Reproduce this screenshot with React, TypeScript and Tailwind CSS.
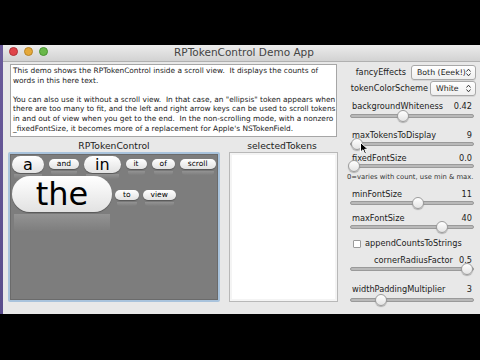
import React from "react"

const sans = "font-['DejaVu_Sans','Liberation_Sans',sans-serif]"

function Knob({ pct }: { pct: number }) {
  return (
    <div className="relative h-[12px] mx-[2px]">
      <div className="absolute left-0 right-0 top-[4px] h-[4px] rounded-full bg-[#b9b9b9] border border-[#9a9a9a]" />
      <div
        className="absolute top-0 w-[12px] h-[12px] -ml-[6px] rounded-full bg-gradient-to-b from-white to-[#e4e4e4] border border-[#9c9c9c] shadow-[0_1px_1px_rgba(0,0,0,0.25)]"
        style={{ left: `${pct}%` }}
      />
    </div>
  )
}

function Slider({
  label,
  value,
  pct,
  mt,
  gap,
  indent,
}: {
  label: string
  value: string
  pct: number
  mt: string
  gap: string
  indent?: string
}) {
  return (
    <div className={mt}>
      <div className={`flex justify-between items-center h-[10px] pr-[4px] text-[8.2px] leading-[10px] text-[#222] whitespace-nowrap ${indent ?? "pl-[4px]"}`}>
        <span>{label}</span>
        <span>{value}</span>
      </div>
      <div className={gap}>
        <Knob pct={pct} />
      </div>
    </div>
  )
}

function Popup({ text, w }: { text: string; w: string }) {
  return (
    <div className={`${w} shrink-0 h-[15px] flex items-center justify-between pl-[5px] pr-[4px] rounded-[3px] bg-gradient-to-b from-white to-[#efefef] border border-[#a8a8a8] shadow-[0_1px_0_rgba(0,0,0,0.08)] text-[7.8px] text-[#222] whitespace-nowrap`}>
      <span>{text}</span>
      <svg width="5" height="9" viewBox="0 0 5 9">
        <path d="M0.5 3.5 L2.5 1.2 L4.5 3.5 M0.5 5.5 L2.5 7.8 L4.5 5.5" fill="none" stroke="#333" strokeWidth="1" />
      </svg>
    </div>
  )
}

function Token({ word, size }: { word: string; size: "s" | "m" | "l" }) {
  const pill =
    size === "l"
      ? "h-[36px] w-[100px] text-[32px] rounded-[18px]"
      : size === "m"
      ? "h-[17px] px-[11px] text-[16px] rounded-[9px]"
      : "h-[10px] px-[8px] text-[7.5px] rounded-[5px]"
  const refl = size === "l" ? "h-[17px] mt-[2px]" : size === "m" ? "h-[5px] mt-[1px]" : "h-[4px] mt-[2px]"
  return (
    <div className="flex flex-col items-stretch">
      <div className={`${pill} flex items-center justify-center bg-gradient-to-b from-white to-[#e2e2e2] text-black leading-none shadow-[0_1px_1px_rgba(0,0,0,0.3)]`}>
        {word}
      </div>
      <div className={`${refl} mx-[2px] rounded-b-[3px] bg-gradient-to-b from-[#939393] to-[#7e7e7e]`} />
    </div>
  )
}

export default function App() {
  const lines1 = [
    "This demo shows the RPTokenControl inside a scroll view.  It displays the counts of",
    "words in this here text.",
  ]
  const lines2 = [
    "You can also use it without a scroll view.  In that case, an \"ellipsis\" token appears when",
    "there are too many to fit, and the left and right arrow keys can be used to scroll tokens",
    "in and out of view when you get to the end.  In the non-scrolling mode, with a nonzero",
    "_fixedFontSize, it becomes more of a replacement for Apple's NSTokenField.",
  ]

  return (
    <div className={`w-[480px] h-[360px] bg-black flex flex-col overflow-hidden ${sans}`}>
      <div className="h-[45px] shrink-0" />
      <div className="flex h-[269px] shrink-0">
        <div className="w-[3px] bg-gradient-to-b from-[#6a5a9a] to-[#5a4d8c]" />
        <div className="relative flex-1 flex flex-col bg-[#e8e8e8]">
          {/* title bar */}
          <div className="h-[17px] shrink-0 flex items-center bg-gradient-to-b from-[#ececec] to-[#d2d2d2] border-b border-[#b0b0b0]">
            <div className="flex gap-[6px] pl-[6px] -mt-[3px]">
              <div className="w-[9px] h-[9px] rounded-full bg-[#e0454a] border border-[#b03338]" />
              <div className="w-[9px] h-[9px] rounded-full bg-[#e5a93a] border border-[#b88427]" />
              <div className="w-[9px] h-[9px] rounded-full bg-[#6ab84a] border border-[#4a9433]" />
            </div>
            <div className="flex-1 text-center text-[10.5px] text-[#444] pr-[40px]">RPTokenControl Demo App</div>
          </div>

          {/* content */}
          <div className="flex flex-1">
            {/* left column */}
            <div className="w-[335px] shrink-0 pl-[5px] flex flex-col">
              <div className="ml-[2px] mt-[2px] w-[327px] h-[73px] bg-white border border-[#a6a6a6] pl-[2px] pt-[1px] text-[7.4px] leading-[9.6px] text-[#222] overflow-hidden">
                {lines1.map((l) => (
                  <div key={l} className="whitespace-pre">{l}</div>
                ))}
                <div className="h-[9.6px]" />
                {lines2.map((l) => (
                  <div key={l} className="whitespace-pre">{l}</div>
                ))}
              </div>

              <div className="flex mt-[4px] h-[10px] items-center text-[9.2px] text-[#222]">
                <div className="w-[212px] text-center">RPTokenControl</div>
                <div className="flex-1 text-center pl-[6px]">selectedTokens</div>
              </div>

              <div className="flex gap-[9px] mt-[1px] h-[150px]">
                <div className="w-[212px] p-[2px] bg-[#a9c3dc] rounded-[2px]">
                  <div className="h-full bg-[#7d7d7d] border border-[#6b6b6b] px-[1px] pt-[1px] overflow-hidden">
                    <div className="flex items-start gap-[5px]">
                      <Token word="a" size="m" />
                      <div className="mt-[3px]"><Token word="and" size="s" /></div>
                      <Token word="in" size="m" />
                      <div className="mt-[3px]"><Token word="it" size="s" /></div>
                      <div className="mt-[3px]"><Token word="of" size="s" /></div>
                      <div className="mt-[3px]"><Token word="scroll" size="s" /></div>
                    </div>
                    <div className="flex items-start gap-[3px] -mt-[3px]">
                      <Token word="the" size="l" />
                      <div className="mt-[14px] flex gap-[4px]">
                        <Token word="to" size="s" />
                        <Token word="view" size="s" />
                      </div>
                    </div>
                  </div>
                </div>
                <div className="flex-1 bg-white border border-[#b8b8b8] shadow-[inset_0_0_0_2px_#f4f4f4]" />
              </div>
            </div>

            {/* right column */}
            <div className="flex-1 min-w-0 pl-[10px] pr-[4px] flex flex-col">
              <div className="flex items-center justify-end gap-[5px] mt-[3px] text-[8.2px] text-[#222] whitespace-nowrap">
                <span>fancyEffects</span>
                <Popup text="Both (Eeek!)" w="w-[65px]" />
              </div>
              <div className="flex items-center justify-end gap-[2px] mt-[1px] text-[8.2px] text-[#222] whitespace-nowrap">
                <span>tokenColorScheme</span>
                <Popup text="White" w="w-[46px]" />
              </div>

              <Slider label="backgroundWhiteness" value="0.42" pct={43} mt="mt-[5px]" gap="-mt-[1px]" />
              <Slider label="maxTokensToDisplay" value="9" pct={6} mt="mt-[8px]" gap="-mt-[2px]" />
              <Slider label="fixedFontSize" value="0.0" pct={3} mt="mt-[3px]" gap="-mt-[3px]" />
              <div className="h-[9px] text-[6.8px] leading-[9px] text-[#333] mt-[1px] -ml-[1px] whitespace-nowrap">0=varies with count, use min &amp; max.</div>
              <Slider label="minFontSize" value="11" pct={55} mt="mt-[7px]" gap="-mt-[2px]" />
              <Slider label="maxFontSize" value="40" pct={74} mt="mt-[4px]" gap="-mt-[2px]" />

              <div className="flex items-center gap-[4px] h-[11px] mt-[5px] pl-[5px] text-[8.2px] text-[#222] whitespace-nowrap">
                <div className="w-[8px] h-[8px] bg-white border border-[#9a9a9a] rounded-[1px]" />
                <span>appendCountsToStrings</span>
              </div>
              <Slider label="cornerRadiusFactor" value="0.5" pct={94} mt="mt-[6px]" gap="-mt-[2px]" indent="pl-[26px]" />
              <Slider label="widthPaddingMultiplier" value="3" pct={25} mt="mt-[9px]" gap="mt-0" />
            </div>
          </div>

          {/* mouse pointer */}
          <svg className="absolute left-[357px] top-[97px]" width="9" height="13" viewBox="0 0 9 13">
            <path d="M0.5 0.5 L0.5 10 L3 7.8 L4.8 12 L6.4 11.3 L4.7 7.3 L8 7.3 Z" fill="#000" stroke="#fff" strokeWidth="1" />
          </svg>
        </div>
      </div>
    </div>
  )
}
